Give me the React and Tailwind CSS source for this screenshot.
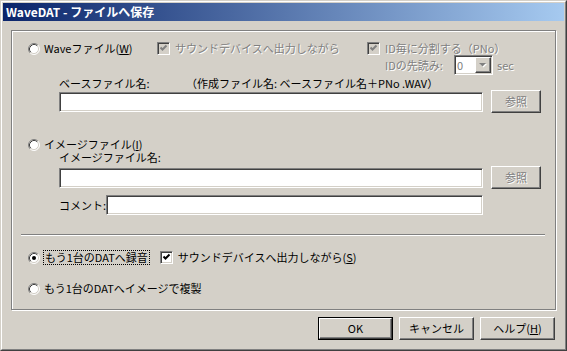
import React from "react";

const sunken =
  "border border-t-[#808080] border-l-[#808080] border-r-white border-b-white shadow-[inset_1px_1px_0_#404040,inset_-1px_-1px_0_#d4d0c8]";
const raised =
  "border border-t-white border-l-white border-r-[#404040] border-b-[#404040] shadow-[inset_-1px_-1px_0_#808080]";
const grayText = "text-[#808080] [text-shadow:1px_1px_0_#fff]";

function Radio({ checked }) {
  return (
    <svg width="12" height="12" viewBox="0 0 12 12" className="shrink-0">
      <circle cx="6" cy="6" r="5" fill="#fff" />
      <path d="M2.11 9.89 A5.5 5.5 0 0 1 9.89 2.11" fill="none" stroke="#808080" />
      <path d="M9.89 2.11 A5.5 5.5 0 0 1 2.11 9.89" fill="none" stroke="#fff" />
      <path d="M2.82 9.18 A4.5 4.5 0 0 1 9.18 2.82" fill="none" stroke="#404040" />
      <path d="M9.18 2.82 A4.5 4.5 0 0 1 2.82 9.18" fill="none" stroke="#d4d0c8" />
      {checked ? <circle cx="6" cy="6" r="2" fill="#000" /> : null}
    </svg>
  );
}

function Check({ disabled }) {
  return (
    <div
      className={`w-[13px] h-[13px] shrink-0 ${sunken} ${disabled ? "bg-[#d4d0c8]" : "bg-white"}`}
    >
      <svg width="11" height="11" viewBox="0 0 11 11">
        <polyline
          points="2.5,4.5 4.5,6.5 8.5,2.5"
          fill="none"
          stroke={disabled ? "#808080" : "#000"}
          strokeWidth="2"
        />
      </svg>
    </div>
  );
}

function Field({ width }) {
  return <div className={`h-[20px] shrink-0 bg-white ${sunken} ${width}`} />;
}

function Button({ children, disabled, width = "w-[75px]" }) {
  return (
    <div
      className={`${width} h-[23px] shrink-0 flex items-center justify-center bg-[#d4d0c8] ${raised} ${
        disabled ? grayText : "text-black"
      }`}
    >
      {children}
    </div>
  );
}

export default function App() {
  return (
    <div className="w-[567px] h-[351px] bg-[#d4d0c8] border border-t-[#d4d0c8] border-l-[#d4d0c8] border-r-[#404040] border-b-[#404040] font-['Noto_Sans_CJK_JP',sans-serif] text-[11px] leading-[13px] text-black whitespace-nowrap overflow-hidden">
      <div className="h-full flex flex-col border border-t-white border-l-white border-r-[#808080] border-b-[#808080] p-px">
        <div className="h-[18px] shrink-0 pl-[3px] flex items-center bg-[linear-gradient(to_right,#0a246a,#a6caf0)] text-white text-[12px] font-bold leading-[18px]">
          WaveDAT - ファイルへ保存
        </div>

        <div className="mx-2 mt-[9px] h-[280px] shrink-0 border border-[#808080] shadow-[1px_1px_0_#fff,inset_1px_1px_0_#fff] flex flex-col">
          <div className="pl-4 pt-[11px] flex flex-col">
            <div className="flex items-start">
              <div className="w-[129px] h-[13px] flex items-center gap-[4px]">
                <Radio />
                <span>
                  Waveファイル(<span className="underline">W</span>)
                </span>
              </div>
              <div className="w-[210px] h-[13px] flex items-center gap-[5px]">
                <Check disabled />
                <span className={grayText}>サウンドデバイスへ出力しながら</span>
              </div>
              <div className="flex flex-col">
                <div className="h-[13px] flex items-center gap-[5px]">
                  <Check disabled />
                  <span className={grayText}>ID毎に分割する（PNo）</span>
                </div>
                <div className="pl-[18px] h-[20px] flex items-center">
                  <span className={`w-[69px] shrink-0 ${grayText}`}>IDの先読み:</span>
                  <div className={`w-[39px] h-[20px] shrink-0 flex items-center bg-white ${sunken} pr-px`}>
                    <span className={`flex-1 pl-[2px] ${grayText}`}>0</span>
                    <div className={`w-[16px] h-[16px] flex items-center justify-center bg-[#d4d0c8] ${raised}`}>
                      <svg width="8" height="5" viewBox="0 0 8 5">
                        <polygon points="1,1 8,1 4.5,4.5" fill="#fff" />
                        <polygon points="0,0 7,0 3.5,3.5" fill="#808080" />
                      </svg>
                    </div>
                  </div>
                  <span className={`ml-[4px] ${grayText}`}>sec</span>
                </div>
              </div>
            </div>

            <div className="mt-[2px] h-[13px] pl-[31px] flex">
              <span className="w-[127px] shrink-0">ベースファイル名:</span>
              <span>（作成ファイル名: ベースファイル名＋PNo .WAV）</span>
            </div>
            <div className="h-[23px] pl-[31px] flex items-center gap-2">
              <Field width="w-[424px]" />
              <Button disabled width="w-[50px]">
                参照
              </Button>
            </div>

            <div className="mt-[25px] h-[13px] flex items-center gap-[4px]">
              <Radio />
              <span>
                イメージファイル(<span className="underline">I</span>)
              </span>
            </div>
            <div className="h-[13px] pl-[31px]">イメージファイル名:</div>
            <div className="mt-[2px] h-[23px] pl-[31px] flex items-center gap-2">
              <Field width="w-[424px]" />
              <Button disabled width="w-[50px]">
                参照
              </Button>
            </div>
            <div className="mt-[6px] h-[20px] pl-[31px] flex items-center">
              <span className="w-[47px] shrink-0">コメント:</span>
              <Field width="w-[377px]" />
            </div>
          </div>

          <div className="mt-[19px] ml-[9px] w-[524px] h-[2px] border-t border-t-[#808080] border-b border-b-white" />

          <div className="pl-4 flex flex-col">
            <div className="mt-[14px] h-[15px] flex items-center">
              <Radio checked />
              <span className="ml-[3px] h-[15px] px-px border border-dotted border-black flex items-center">
                もう1台のDATへ録音
              </span>
              <div className="ml-[10px] flex items-center gap-[5px]">
                <Check />
                <span>
                  サウンドデバイスへ出力しながら(<span className="underline">S</span>)
                </span>
              </div>
            </div>
            <div className="mt-[17px] h-[13px] flex items-center gap-[4px]">
              <Radio />
              <span>もう1台のDATへイメージで複製</span>
            </div>
          </div>
        </div>

        <div className="mt-[7px] pr-[9px] flex justify-end gap-[6px]">
          <div className="w-[75px] h-[23px] border border-black flex">
            <div className={`flex-1 flex items-center justify-center bg-[#d4d0c8] ${raised}`}>OK</div>
          </div>
          <Button>キャンセル</Button>
          <Button>
            ヘルプ(<span className="underline">H</span>)
          </Button>
        </div>
      </div>
    </div>
  );
}
